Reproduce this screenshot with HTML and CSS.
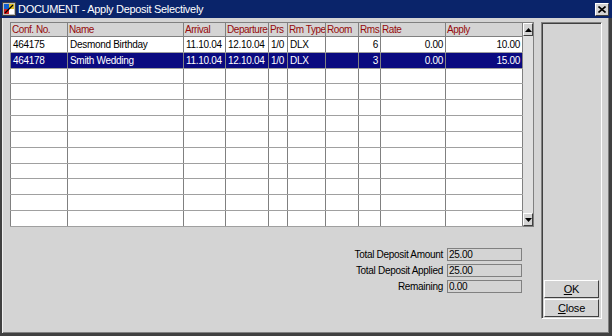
FILE: index.html
```html
<!DOCTYPE html>
<html>
<head>
<meta charset="utf-8">
<link rel="stylesheet" href="styles.css">
</head>
<body>
<div class="window">
  <div class="titlebar">
    <svg class="appicon" width="14" height="14" viewBox="0 0 14 14">
      <rect x="0.5" y="0.5" width="13" height="13" fill="#c0c0c0" stroke="#404040"/>
      <rect x="2" y="2" width="5" height="5" fill="#1060d0"/>
      <rect x="7" y="2" width="5" height="5" fill="#e0c020"/>
      <rect x="2" y="7" width="5" height="5" fill="#d02020"/>
      <rect x="7" y="7" width="5" height="5" fill="#ffffff"/>
      <path d="M3 11 L11 3" stroke="#000" stroke-width="1.2"/>
    </svg>
    <span class="title">DOCUMENT - Apply Deposit Selectively</span>
    <span class="closebtn">
      <svg width="8" height="7" viewBox="0 0 8 7"><path d="M0.5 0.5 L7.5 6.5 M7.5 0.5 L0.5 6.5" stroke="#000" stroke-width="1.6"/></svg>
    </span>
  </div>
  <div class="content">
    <div class="main">
      <div class="gridbox">
        <table class="grid">
          <colgroup>
            <col class="c1"><col class="c2"><col class="c3"><col class="c4"><col class="c5">
            <col class="c6"><col class="c7"><col class="c8"><col class="c9"><col class="c10">
          </colgroup>
          <thead>
            <tr><th>Conf. No.</th><th>Name</th><th>Arrival</th><th>Departure</th><th>Prs</th><th>Rm Type</th><th>Room</th><th>Rms</th><th>Rate</th><th>Apply</th></tr>
          </thead>
          <tbody>
            <tr><td>464175</td><td>Desmond Birthday</td><td>11.10.04</td><td>12.10.04</td><td>1/0</td><td>DLX</td><td></td><td class="num">6</td><td class="num">0.00</td><td class="num">10.00</td></tr>
            <tr class="sel"><td>464178</td><td>Smith Wedding</td><td>11.10.04</td><td>12.10.04</td><td>1/0</td><td>DLX</td><td></td><td class="num">3</td><td class="num">0.00</td><td class="num">15.00</td></tr>
            <tr><td></td><td></td><td></td><td></td><td></td><td></td><td></td><td></td><td></td><td></td></tr>
            <tr><td></td><td></td><td></td><td></td><td></td><td></td><td></td><td></td><td></td><td></td></tr>
            <tr><td></td><td></td><td></td><td></td><td></td><td></td><td></td><td></td><td></td><td></td></tr>
            <tr><td></td><td></td><td></td><td></td><td></td><td></td><td></td><td></td><td></td><td></td></tr>
            <tr><td></td><td></td><td></td><td></td><td></td><td></td><td></td><td></td><td></td><td></td></tr>
            <tr><td></td><td></td><td></td><td></td><td></td><td></td><td></td><td></td><td></td><td></td></tr>
            <tr><td></td><td></td><td></td><td></td><td></td><td></td><td></td><td></td><td></td><td></td></tr>
            <tr><td></td><td></td><td></td><td></td><td></td><td></td><td></td><td></td><td></td><td></td></tr>
            <tr><td></td><td></td><td></td><td></td><td></td><td></td><td></td><td></td><td></td><td></td></tr>
            <tr><td></td><td></td><td></td><td></td><td></td><td></td><td></td><td></td><td></td><td></td></tr>
          </tbody>
        </table>
        <div class="scrollbar">
          <div class="sbtn"><svg width="7" height="4" viewBox="0 0 7 4"><path d="M3.5 0 L7 4 L0 4 Z" fill="#000"/></svg></div>
          <div class="strack"></div>
          <div class="sbtn"><svg width="7" height="4" viewBox="0 0 7 4"><path d="M0 0 L7 0 L3.5 4 Z" fill="#000"/></svg></div>
        </div>
      </div>
      <div class="totals">
        <div class="trow"><span class="tlabel">Total Deposit Amount</span><span class="tval">25.00</span></div>
        <div class="trow"><span class="tlabel">Total Deposit Applied</span><span class="tval">25.00</span></div>
        <div class="trow"><span class="tlabel">Remaining</span><span class="tval">0.00</span></div>
      </div>
    </div>
    <div class="side">
      <button class="btn"><u>O</u>K</button>
      <button class="btn"><u>C</u>lose</button>
    </div>
  </div>
</div>
</body>
</html>
```
FILE: styles.css
```css
html, body {
  margin: 0;
  padding: 0;
  background: #d4d4d4;
}
body {
  font-family: "Liberation Sans", Arial, sans-serif;
  font-size: 10px;
  letter-spacing: -0.3px;
}
.window {
  width: 612px;
  height: 336px;
  box-sizing: border-box;
  background: #d4d4d4;
  border-left: 2px solid #404040;
  border-right: 3px solid #404040;
  border-bottom: 3px solid #404040;
  box-shadow: inset 1px 0 0 #f0f0f0, inset -1px -1px 0 #808080;
  display: flex;
  flex-direction: column;
}
.titlebar {
  height: 18px;
  margin-left: -2px;
  margin-right: -3px;
  background: #0a246a;
  display: flex;
  align-items: center;
  padding: 0 3px 0 2px;
  color: #fff;
}
.appicon {
  flex: none;
  margin-right: 2px;
}
.title {
  flex: 1;
  font-size: 11px;
  letter-spacing: -0.3px;
}
.closebtn {
  width: 14px;
  height: 13px;
  box-sizing: border-box;
  background: #d4d4d4;
  border: 1px solid;
  border-color: #fff #404040 #404040 #fff;
  display: flex;
  align-items: center;
  justify-content: center;
}
.content {
  flex: 1;
  display: flex;
  padding: 4px 0 0 8px;
  gap: 7px;
}
.main {
  width: 524px;
  display: flex;
  flex-direction: column;
}
.gridbox {
  display: flex;
  height: 205px;
}
.grid {
  width: 512px;
  border-collapse: collapse;
  table-layout: fixed;
  background: #fff;
  border: 1px solid #808080;
}
.c1 { width: 57px; }
.c2 { width: 116px; }
.c3 { width: 42px; }
.c4 { width: 43px; }
.c5 { width: 19px; }
.c6 { width: 38px; }
.c7 { width: 33px; }
.c8 { width: 22px; }
.c9 { width: 65px; }
.c10 { width: 77px; }
.grid th {
  height: 13px;
  background: #d4d4d4;
  color: #960a0a;
  font-weight: normal;
  text-align: left;
  padding: 0 0 0 1px;
  letter-spacing: -0.45px;
  border: 1px solid #808080;
  white-space: nowrap;
  overflow: hidden;
}
.grid td {
  height: 14px;
  padding: 0 2px;
  border-left: 1px solid #808080;
  border-right: 1px solid #808080;
  border-bottom: 1px solid #a0a0a0;
  white-space: nowrap;
  overflow: hidden;
  color: #000;
}
.grid td.num {
  text-align: right;
}
.grid tr.sel td {
  background: #0a0a80;
  color: #fff;
}
.scrollbar {
  width: 12px;
  display: flex;
  flex-direction: column;
  background: #d4d4d4;
  border: 1px solid #808080;
  border-left: none;
}
.sbtn {
  height: 13px;
  box-sizing: border-box;
  border: 1px solid;
  border-color: #fff #404040 #404040 #fff;
  display: flex;
  align-items: center;
  justify-content: center;
}
.strack {
  flex: 1;
  background: #e0e0e0;
}
.totals {
  margin-top: 21px;
  margin-right: 12px;
  display: flex;
  flex-direction: column;
  gap: 3px;
  align-items: flex-end;
}
.trow {
  display: flex;
  align-items: center;
  gap: 4px;
}
.tlabel {
  color: #000;
}
.tval {
  width: 75px;
  height: 13px;
  box-sizing: border-box;
  border: 1px solid #808080;
  background: #d4d4d4;
  padding-left: 1px;
  line-height: 11px;
  color: #000;
}
.side {
  width: 61px;
  height: 297px;
  box-sizing: border-box;
  border: 1px solid;
  border-color: #808080 #fff #fff #808080;
  box-shadow: inset 1px 1px 0 #404040;
  display: flex;
  flex-direction: column;
  justify-content: flex-end;
  padding: 2px 2px 1px 2px;
  gap: 1px;
}
.btn {
  height: 18px;
  font-family: "Liberation Sans", Arial, sans-serif;
  font-size: 11px;
  letter-spacing: -0.2px;
  background: #d4d4d4;
  border: 1px solid;
  border-color: #fff #404040 #404040 #fff;
  padding: 0;
  color: #000;
}
```
